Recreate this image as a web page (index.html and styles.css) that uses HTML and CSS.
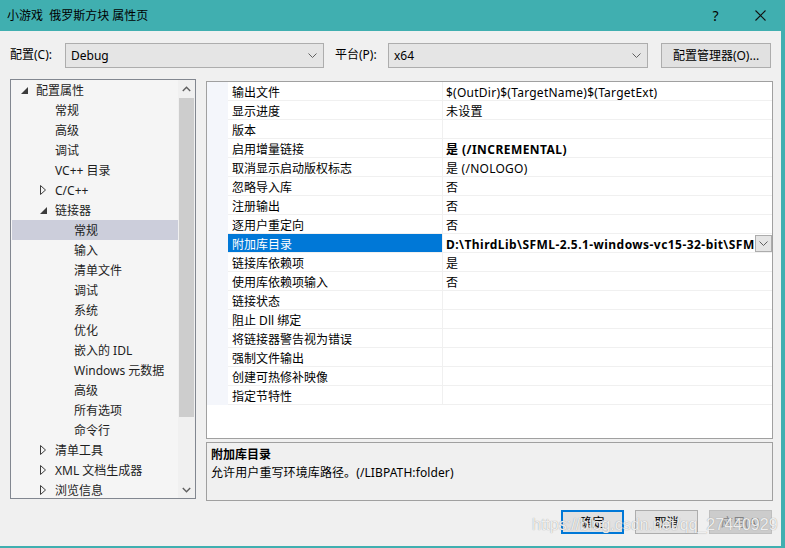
FILE: index.html
```html
<!DOCTYPE html>
<html lang="zh-CN">
<head>
  <meta charset="UTF-8">
  <title>小游戏 俄罗斯方块 属性页</title>
  <link rel="stylesheet" href="styles.css">
</head>
<body>
  <div class="window">
    <div class="titlebar">
      <span class="title">小游戏&nbsp;&nbsp;俄罗斯方块 属性页</span>
      <span class="caption-btn">?</span>
      <span class="caption-btn">
        <svg width="11" height="11" viewBox="0 0 11 11"><path d="M0.5 0.5L10.5 10.5M10.5 0.5L0.5 10.5" stroke="#111" stroke-width="1.1" fill="none"/></svg>
      </span>
    </div>

    <div class="dialog">
      <div class="toolbar">
        <label class="lbl lbl-config">配置(C):</label>
        <div class="combo combo-config">
          <span>Debug</span>
          <svg class="chev" width="9" height="5" viewBox="0 0 9 5"><path d="M0.5 0.5L4.5 4.5L8.5 0.5" stroke="#606060" fill="none"/></svg>
        </div>
        <label class="lbl lbl-platform">平台(P):</label>
        <div class="combo combo-platform">
          <span>x64</span>
          <svg class="chev" width="9" height="5" viewBox="0 0 9 5"><path d="M0.5 0.5L4.5 4.5L8.5 0.5" stroke="#606060" fill="none"/></svg>
        </div>
        <button class="btn btn-manager">配置管理器(O)...</button>
      </div>

      <div class="main">
        <div class="tree">
          <div class="tree-items">
            <div class="node lv0"><span class="arrow"><svg width="7" height="7" viewBox="0 0 7 7"><polygon points="7,0 7,7 0,7" fill="#3c3c3c"/></svg></span>配置属性</div>
            <div class="node lv1"><span class="arrow"></span>常规</div>
            <div class="node lv1"><span class="arrow"></span>高级</div>
            <div class="node lv1"><span class="arrow"></span>调试</div>
            <div class="node lv1"><span class="arrow"></span>VC++ 目录</div>
            <div class="node lv1"><span class="arrow"><svg width="7" height="10" viewBox="0 0 7 10"><polygon points="0.5,0.5 5.5,5 0.5,9.5" fill="none" stroke="#3c3c3c"/></svg></span>C/C++</div>
            <div class="node lv1"><span class="arrow"><svg width="7" height="7" viewBox="0 0 7 7"><polygon points="7,0 7,7 0,7" fill="#3c3c3c"/></svg></span>链接器</div>
            <div class="node lv2 selected"><span class="arrow"></span>常规</div>
            <div class="node lv2"><span class="arrow"></span>输入</div>
            <div class="node lv2"><span class="arrow"></span>清单文件</div>
            <div class="node lv2"><span class="arrow"></span>调试</div>
            <div class="node lv2"><span class="arrow"></span>系统</div>
            <div class="node lv2"><span class="arrow"></span>优化</div>
            <div class="node lv2"><span class="arrow"></span>嵌入的 IDL</div>
            <div class="node lv2"><span class="arrow"></span>Windows 元数据</div>
            <div class="node lv2"><span class="arrow"></span>高级</div>
            <div class="node lv2"><span class="arrow"></span>所有选项</div>
            <div class="node lv2"><span class="arrow"></span>命令行</div>
            <div class="node lv1"><span class="arrow"><svg width="7" height="10" viewBox="0 0 7 10"><polygon points="0.5,0.5 5.5,5 0.5,9.5" fill="none" stroke="#3c3c3c"/></svg></span>清单工具</div>
            <div class="node lv1"><span class="arrow"><svg width="7" height="10" viewBox="0 0 7 10"><polygon points="0.5,0.5 5.5,5 0.5,9.5" fill="none" stroke="#3c3c3c"/></svg></span>XML 文档生成器</div>
            <div class="node lv1"><span class="arrow"><svg width="7" height="10" viewBox="0 0 7 10"><polygon points="0.5,0.5 5.5,5 0.5,9.5" fill="none" stroke="#3c3c3c"/></svg></span>浏览信息</div>
          </div>
          <div class="scrollbar">
            <div class="sb-arrow"><svg width="9" height="6" viewBox="0 0 9 6"><path d="M0.8 5L4.5 1.2L8.2 5" stroke="#606060" stroke-width="1.4" fill="none"/></svg></div>
            <div class="sb-thumb"></div>
            <div class="sb-track"></div>
            <div class="sb-arrow"><svg width="9" height="6" viewBox="0 0 9 6"><path d="M0.8 1L4.5 4.8L8.2 1" stroke="#606060" stroke-width="1.4" fill="none"/></svg></div>
          </div>
        </div>

        <div class="right">
          <div class="grid">
            <div class="rows">
              <div class="row"><div class="name">输出文件</div><div class="value">$(OutDir)$(TargetName)$(TargetExt)</div></div>
              <div class="row"><div class="name">显示进度</div><div class="value">未设置</div></div>
              <div class="row"><div class="name">版本</div><div class="value"></div></div>
              <div class="row"><div class="name">启用增量链接</div><div class="value bold">是 (/INCREMENTAL)</div></div>
              <div class="row"><div class="name">取消显示启动版权标志</div><div class="value">是 (/NOLOGO)</div></div>
              <div class="row"><div class="name">忽略导入库</div><div class="value">否</div></div>
              <div class="row"><div class="name">注册输出</div><div class="value">否</div></div>
              <div class="row"><div class="name">逐用户重定向</div><div class="value">否</div></div>
              <div class="row selected">
                <div class="name">附加库目录</div>
                <div class="value bold">
                  <span class="clip">D:\ThirdLib\SFML-2.5.1-windows-vc15-32-bit\SFML-2.5.1\lib;%(AdditionalLibraryDirectories)</span>
                  <span class="drop"><svg width="9" height="5" viewBox="0 0 9 5"><path d="M0.5 0.5L4.5 4.5L8.5 0.5" stroke="#606060" fill="none"/></svg></span>
                </div>
              </div>
              <div class="row"><div class="name">链接库依赖项</div><div class="value">是</div></div>
              <div class="row"><div class="name">使用库依赖项输入</div><div class="value">否</div></div>
              <div class="row"><div class="name">链接状态</div><div class="value"></div></div>
              <div class="row"><div class="name">阻止 Dll 绑定</div><div class="value"></div></div>
              <div class="row"><div class="name">将链接器警告视为错误</div><div class="value"></div></div>
              <div class="row"><div class="name">强制文件输出</div><div class="value"></div></div>
              <div class="row"><div class="name">创建可热修补映像</div><div class="value"></div></div>
              <div class="row"><div class="name">指定节特性</div><div class="value"></div></div>
            </div>
          </div>
          <div class="desc">
            <div class="desc-title">附加库目录</div>
            <div class="desc-text">允许用户重写环境库路径。(/LIBPATH:folder)</div>
          </div>
        </div>
      </div>

      <div class="footer">
        <button class="btn btn-default">确定</button>
        <button class="btn">取消</button>
        <button class="btn btn-disabled">应用(A)</button>
      </div>
    </div>

    <div class="watermark">https://blog.csdn.net/qq_27440929</div>
  </div>
</body>
</html>
```

FILE: styles.css
```css
* {
  box-sizing: border-box;
}
body {
  margin: 0;
  font-family: "Noto Sans", "Noto Sans CJK SC", sans-serif;
  font-size: 12px;
  color: #000;
  background-color: #f0f0f0;
}
.window {
  position: relative;
  width: 785px;
  height: 548px;
  display: flex;
  flex-direction: column;
  background-color: #f0f0f0;
  overflow: hidden;
}

/* title bar */
.titlebar {
  height: 31px;
  flex-shrink: 0;
  display: flex;
  align-items: center;
  padding-left: 7px;
  padding-right: 2px;
  background-color: #40afb0;
  color: #000;
}
.title {
  flex: 1;
  line-height: 16px;
}
.caption-btn {
  width: 45px;
  height: 31px;
  display: flex;
  align-items: center;
  justify-content: center;
  font-size: 14px;
}

/* dialog body */
.dialog {
  flex: 1;
  display: flex;
  flex-direction: column;
  padding: 11px 8px 0 10px;
  border-right: 4px solid #40afb0;
  border-bottom: 2px solid #40afb0;
}
.toolbar {
  display: flex;
  align-items: center;
  height: 26px;
}
.lbl {
  line-height: 16px;
}
.lbl-config {
  width: 55px;
}
.lbl-platform {
  width: 53px;
  margin-left: 11px;
}
.combo {
  height: 25px;
  margin-top: 1px;
  display: flex;
  align-items: center;
  justify-content: space-between;
  padding: 0 5px 0 5px;
  background-color: #e5e5e5;
  border: 1px solid #adadad;
}
.combo-config {
  width: 259px;
}
.combo-platform {
  width: 260px;
}
.chev {
  margin-right: 1px;
}
.btn {
  height: 25px;
  font-family: inherit;
  font-size: 12px;
  color: #000;
  background-color: #e1e1e1;
  border: 1px solid #adadad;
  padding: 0;
}
.btn-manager {
  width: 110px;
  margin-left: 13px;
}

/* tree + grid */
.main {
  display: flex;
  gap: 10px;
  margin-top: 11px;
  height: 422px;
}
.tree {
  width: 186px;
  height: 420px;
  display: flex;
  background-color: #f5f5f5;
  border: 1px solid #828790;
  overflow: hidden;
}
.tree-items {
  flex: 1;
  color: #1e1e1e;
}
.node {
  height: 20px;
  display: flex;
  align-items: center;
  white-space: nowrap;
}
.node.lv0 {
  padding-left: 10px;
}
.node.lv1 {
  padding-left: 29px;
}
.node.lv2 {
  padding-left: 48px;
}
.node.selected {
  background-color: #cccedb;
  margin-left: 1px;
  padding-left: 47px;
}
.arrow {
  width: 15px;
  height: 20px;
  display: flex;
  align-items: center;
}
.scrollbar {
  width: 17px;
  display: flex;
  flex-direction: column;
  background-color: #f0f0f0;
}
.sb-arrow {
  height: 17px;
  display: flex;
  align-items: center;
  justify-content: center;
}
.sb-thumb {
  height: 319px;
  margin: 1px 1px 0;
  background-color: #cdcdcd;
}
.sb-track {
  flex: 1;
}

.right {
  width: 567px;
  margin-top: 2px;
  display: flex;
  flex-direction: column;
  gap: 3px;
}
.grid {
  height: 358px;
  background-color: #fff;
  border: 1px solid #a0a0a0;
}
.rows {
  border-left: 21px solid #f4f6fb;
}
.row {
  height: 19px;
  display: flex;
  border-bottom: 1px solid #f0f0f0;
}
.name {
  width: 215px;
  padding: 2px 0 0 4px;
  line-height: 17px;
  border-right: 1px solid #f0f0f0;
  white-space: nowrap;
}
.value {
  flex: 1;
  min-width: 0;
  padding: 2px 0 0 3px;
  line-height: 17px;
  letter-spacing: 0.25px;
  white-space: nowrap;
  display: flex;
}
.value.bold {
  font-weight: bold;
  letter-spacing: 0.45px;
}
.row.selected .name {
  background-color: #0078d7;
  color: #fff;
}
.row.selected .value {
  padding-top: 0;
}
.row.selected .clip {
  padding-top: 2px;
}
.clip {
  flex: 1;
  overflow: hidden;
}
.drop {
  width: 17px;
  height: 17px;
  margin-top: 1px;
  display: flex;
  align-items: center;
  justify-content: center;
  background-color: #e5e5e5;
  border: 1px solid #acacac;
}
.desc {
  height: 59px;
  padding: 3px 4px;
  background-color: #f0f0f0;
  border: 1px solid #a0a0a0;
}
.desc-title {
  font-weight: bold;
  line-height: 18px;
}
.desc-text {
  line-height: 18px;
  letter-spacing: 0.1px;
}

/* buttons */
.footer {
  display: flex;
  justify-content: flex-end;
  gap: 11px;
  margin-top: 9px;
  padding-right: 1px;
}
.footer .btn {
  width: 63px;
  height: 24px;
}
.btn-default {
  border: 2px solid #0078d7;
}
.btn-disabled {
  background-color: #cccccc;
  border-color: #bfbfbf;
  color: #838383;
}

.watermark {
  position: absolute;
  left: 532px;
  top: 516px;
  font-family: "Liberation Sans", sans-serif;
  font-size: 16px;
  line-height: 18px;
  color: rgba(255, 255, 255, 0.85);
  text-shadow: 0 0 1px #8a8a8a;
  white-space: nowrap;
}
```
